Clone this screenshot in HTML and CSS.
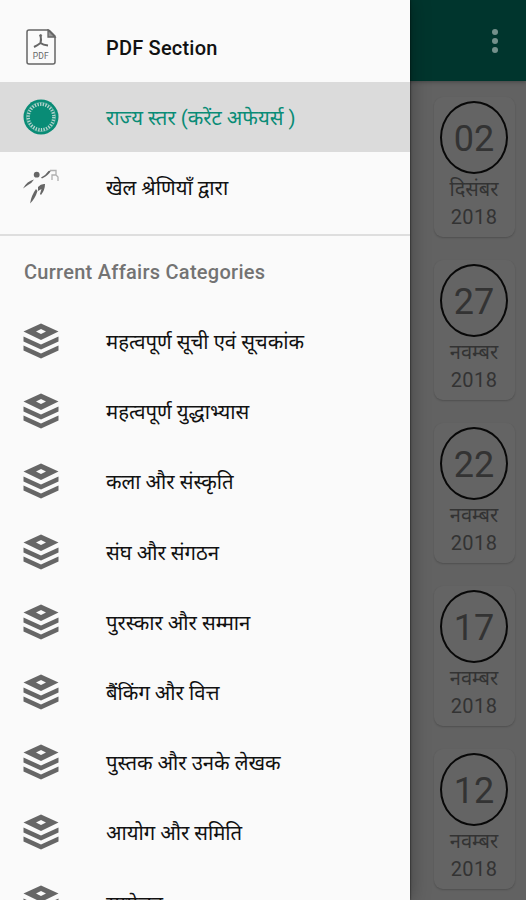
FILE: index.html
```
<!DOCTYPE html>
<html lang="hi">

<head>
    <meta charset="UTF-8">
    <meta name="viewport" content="width=device-width, initial-scale=1.0">
    <title>Current Affairs</title>
    <link rel="stylesheet" href="styles.css">
</head>

<body>
    <svg class="symbols" width="0" height="0">
        <symbol id="layers" viewBox="0 0 36 36">
            <path fill-rule="evenodd" d="M18 0.5L35.5 8.5L18 17L0.5 8.5ZM18 6L13 8.5L18 11L23 8.5Z"/>
            <path d="M0.5 13.5L18 21.5L35.5 13.5V18.5L18 26.5L0.5 18.5Z"/>
            <path d="M0.5 22.5L18 30.5L35.5 22.5V27.5L18 35.5L0.5 27.5Z"/>
        </symbol>
    </svg>

    <!-- main screen -->
    <div class="app">
        <header class="toolbar">
            <div class="more"><span></span><span></span><span></span></div>
        </header>
        <main class="dates">
            <div class="date-card"><div class="day">02</div><div class="month">दिसंबर</div><div class="year">2018</div></div>
            <div class="date-card"><div class="day">27</div><div class="month">नवम्बर</div><div class="year">2018</div></div>
            <div class="date-card"><div class="day">22</div><div class="month">नवम्बर</div><div class="year">2018</div></div>
            <div class="date-card"><div class="day">17</div><div class="month">नवम्बर</div><div class="year">2018</div></div>
            <div class="date-card"><div class="day">12</div><div class="month">नवम्बर</div><div class="year">2018</div></div>
        </main>
    </div>

    <!-- navigation drawer -->
    <nav class="drawer">
        <div class="menu menu-top">
            <a class="item latin">
                <svg class="icon line-icon" viewBox="0 0 36 36" stroke="#666">
                    <path stroke-width="1.5" d="M26 1H6Q4 1 4 3V33Q4 35 6 35H30Q32 35 32 33V7L26 1"/>
                    <path fill="#999" stroke-width="1.3" d="M25 1V8H32Z"/>
                    <path stroke-width="2" d="M17.5 6Q18.5 11 17.5 14Q15 16 11 18M17.5 14Q20 16 25 16.5"/>
                    <circle cx="17.6" cy="6.5" r="1"/>
                    <text class="pdf-label" x="9.7" y="30">PDF</text>
                </svg>
                <span>PDF Section</span>
            </a>
            <a class="item active">
                <svg class="icon line-icon" viewBox="0 0 36 36">
                    <circle cx="18" cy="18" r="17.5" fill="#098c76"/>
                    <circle cx="18" cy="18" r="12.8" stroke="#b4d3cc" stroke-width="3.4" stroke-dasharray="1.4 1.28"/>
                    <circle cx="18" cy="18" r="14.6" stroke="#7fbbb0" stroke-width="0.6"/>
                </svg>
                <span>राज्य स्तर (करेंट अफेयर्स )</span>
            </a>
            <a class="item">
                <svg class="icon" viewBox="0 0 36 36">
                    <circle cx="13.7" cy="5.7" r="2.9"/>
                    <path d="M0 19.5Q4 12 11 10.5Q9 14 5 16Z"/>
                    <path d="M18 8.5Q23 6 25.5 2L28 1.5Q26 6 19 9.5Z"/>
                    <path d="M7 34.5Q8.5 26 13 20L14.5 22Q12 30 7 34.5Z"/>
                    <path d="M15 18Q18 14.5 22 15Q22 21 18 26L17 25L18.5 20L15 22Z"/>
                    <path class="flag" d="M27 1.500H33V6H29V11M33 6L35 8V12"/>
                </svg>
                <span>खेल श्रेणियाँ द्वारा</span>
            </a>
        </div>
        <h2 class="subheader">Current Affairs Categories</h2>
        <div class="menu">
            <a class="item"><svg class="icon"><use href="#layers"/></svg><span>महत्वपूर्ण सूची एवं सूचकांक</span></a>
            <a class="item"><svg class="icon"><use href="#layers"/></svg><span>महत्वपूर्ण युद्धाभ्यास</span></a>
            <a class="item"><svg class="icon"><use href="#layers"/></svg><span>कला और संस्कृति</span></a>
            <a class="item"><svg class="icon"><use href="#layers"/></svg><span>संघ और संगठन</span></a>
            <a class="item"><svg class="icon"><use href="#layers"/></svg><span>पुरस्कार और सम्मान</span></a>
            <a class="item"><svg class="icon"><use href="#layers"/></svg><span>बैंकिंग और वित्त</span></a>
            <a class="item"><svg class="icon"><use href="#layers"/></svg><span>पुस्तक और उनके लेखक</span></a>
            <a class="item"><svg class="icon"><use href="#layers"/></svg><span>आयोग और समिति</span></a>
            <a class="item"><svg class="icon"><use href="#layers"/></svg><span>सम्मेलन</span></a>
        </div>
    </nav>
</body>

</html>
```
FILE: styles.css
```
* {
    box-sizing: border-box;
}

body {
    margin: 0;
    height: 900px;
    position: relative;
    overflow: hidden;
    font-family: Roboto, "Noto Sans", "Noto Sans Devanagari", sans-serif;
}

.symbols {
    display: block;
}

/* main screen, dimmed behind the drawer */
.app {
    height: 900px;
    overflow: hidden;
    background: #626262;
}

.toolbar {
    height: 81px;
    padding-right: 28px;
    display: flex;
    align-items: center;
    justify-content: flex-end;
    background: #00352d;
    box-shadow: 0 1px 4px rgba(0,0,0,0.3);
}

.more {
    display: flex;
    flex-direction: column;
    gap: 3px;
}

.more span {
    width: 6px;
    height: 6px;
    border-radius: 50%;
    background: #74908b;
}

.dates {
    display: flex;
    flex-direction: column;
    align-items: flex-end;
    gap: 23px;
    padding: 16px 11.5px 0 0;
}

.date-card {
    flex: none;
    width: 81px;
    height: 140px;
    padding-top: 4px;
    display: flex;
    flex-direction: column;
    align-items: center;
    border-radius: 9px;
    background: #646464;
    box-shadow: 0 1px 2px rgba(0,0,0,0.2);
    color: #333;
}

.day {
    width: 68px;
    height: 73px;
    border: 2px solid #080808;
    border-radius: 50%;
    font-size: 36px;
    line-height: 72px;
    text-align: center;
}

.month {
    height: 28px;
    font-size: 20px;
    line-height: 30px;
}

.year {
    font-size: 20px;
    line-height: 31px;
    letter-spacing: 0.4px;
}

/* navigation drawer */
.drawer {
    position: absolute;
    top: 0;
    left: 0;
    width: 410px;
    height: 900px;
    overflow: hidden;
    background: #fafafa;
    box-shadow: 0 0 18px rgba(0,0,0,0.35), 0 0 2px rgba(0,0,0,0.8);
}

.menu-top {
    height: 236px;
    padding-top: 12px;
    border-bottom: 2px solid #dedede;
}

.item {
    height: 70.2px;
    padding-left: 23px;
    display: flex;
    align-items: center;
    gap: 47px;
    font-size: 20.3px;
    font-weight: 400;
    color: #111;
    white-space: nowrap;
}

.item.latin {
    font-size: 20px;
    font-weight: 500;
    letter-spacing: 0.2px;
}

.item.latin span {
    padding-top: 1px;
}

.item.active {
    background: #dbdbdb;
    color: #098c76;
}

.icon {
    width: 36px;
    height: 36px;
    flex: none;
    fill: #666;
}

.line-icon {
    fill: none;
}

.flag {
    fill: none;
    stroke: #b0b0b0;
    stroke-width: 1.3;
}

.pdf-label {
    font-size: 8.5px;
    font-weight: 400;
    fill: #666;
    stroke: none;
}

.subheader {
    margin: 0;
    height: 70px;
    padding-left: 24px;
    font-size: 20px;
    line-height: 72px;
    font-weight: 500;
    letter-spacing: 0.27px;
    color: #737373;
}
```
